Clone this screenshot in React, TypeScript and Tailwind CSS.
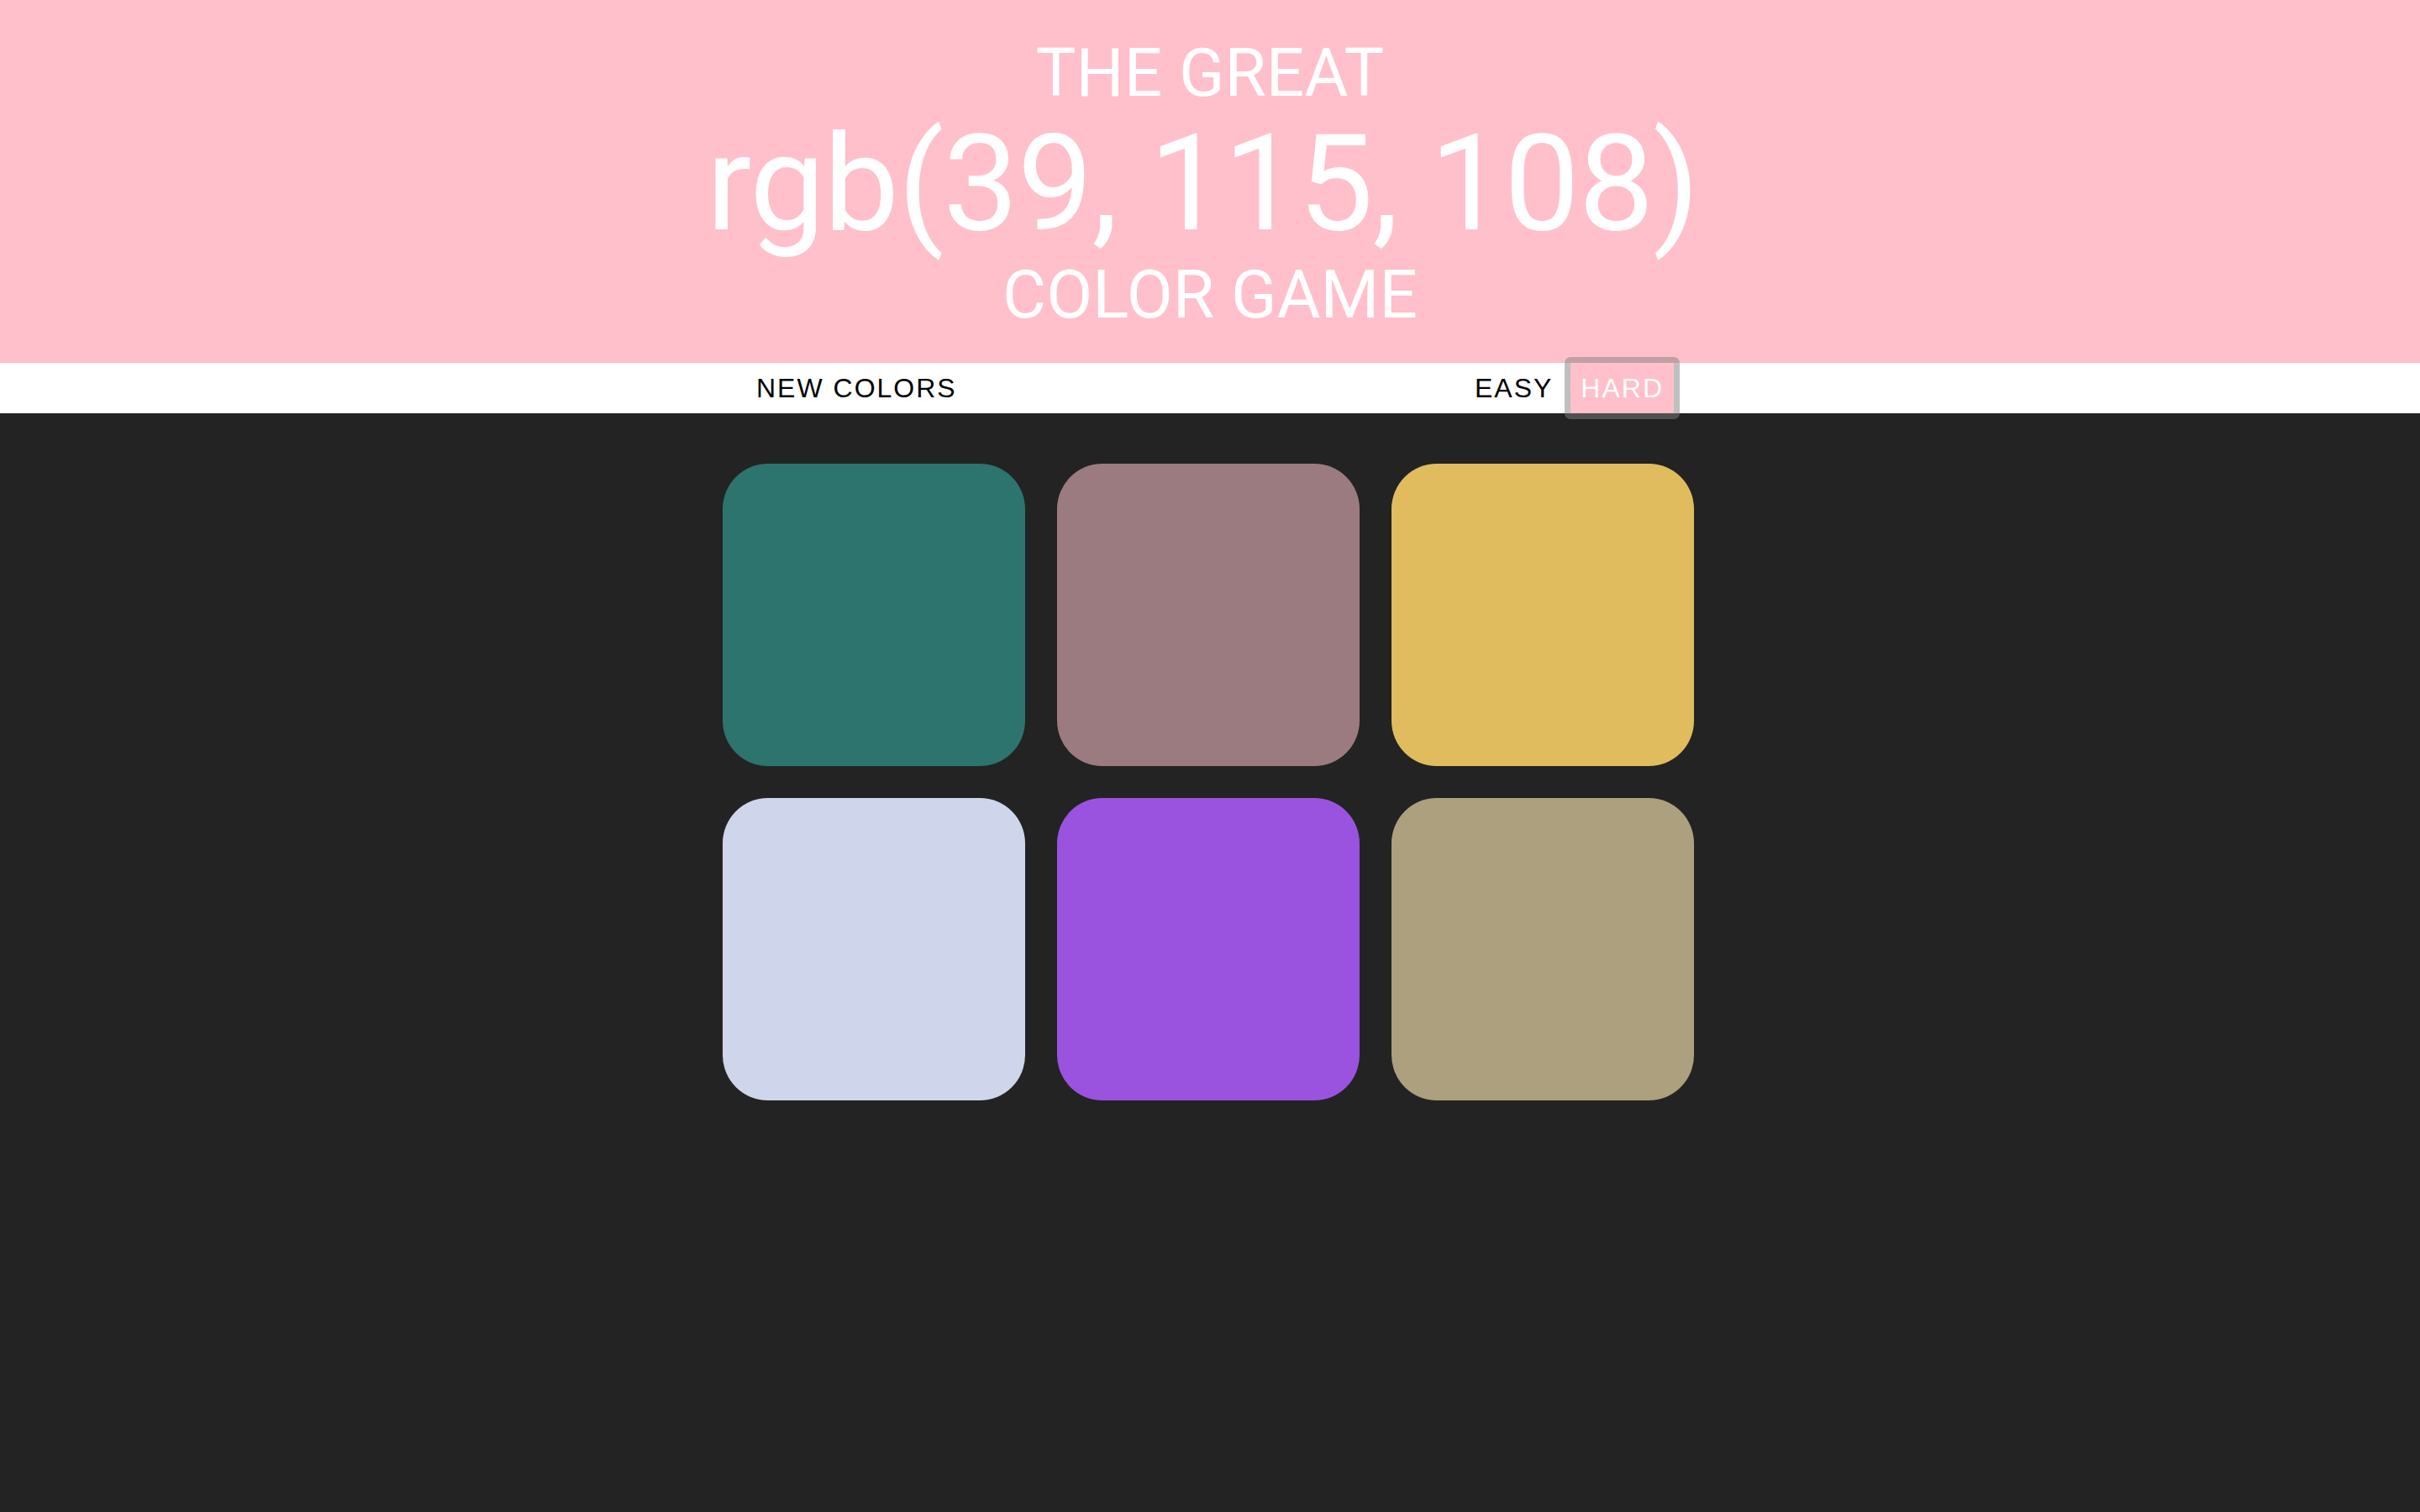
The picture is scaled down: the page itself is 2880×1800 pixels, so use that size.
import React, { useState } from "react";

const squares = [
  "rgb(44, 116, 109)",
  "rgb(156, 123, 128)",
  "rgb(224, 188, 94)",
  "rgb(207, 214, 235)",
  "rgb(154, 83, 222)",
  "rgb(173, 160, 127)",
];

const App = () => {
  const [mode, setMode] = useState("hard");

  return (
    <div className="min-h-screen bg-[#232323] font-['Liberation_Sans',Arial,sans-serif]">
      {/* header */}
      <h1 className="bg-[#ffc0cb] text-white text-center uppercase font-normal leading-[1.1] pt-[43px] pb-[37px] font-['Roboto',sans-serif]">
        <div className="text-[80px]">The Great</div>
        <div className="text-[160px] normal-case tracking-[-1.4px] pr-[18px]">rgb(39, 115, 108)</div>
        <div className="text-[80px]">Color Game</div>
      </h1>

      {/* stripe */}
      <div className="bg-white h-[60px]">
        <div className="w-[1200px] mx-auto h-full px-[48px] flex justify-between items-stretch text-[32px] tracking-[2px] uppercase text-black">
          <button className="px-[12px] uppercase">New Colors</button>
          <div className="flex items-stretch gap-[9px]">
            <button
              onClick={() => setMode("easy")}
              className={mode === "easy" ? "relative px-[12px] bg-[#ffc0cb] text-white uppercase" : "px-[12px] uppercase"}
            >
              Easy
            </button>
            <button
              onClick={() => setMode("hard")}
              className={mode === "hard" ? "relative px-[12px] bg-[#ffc0cb] text-white uppercase" : "px-[12px] uppercase"}
            >
              Hard
              {mode === "hard" && (
                <span className="absolute -inset-[7px] rounded-[7px] border-[7px] border-[#80808080] pointer-events-none" />
              )}
            </button>
          </div>
        </div>
      </div>

      {/* squares */}
      <div className="w-[1200px] mx-auto mt-[40px] flex flex-wrap">
        {squares.map((c, i) => (
          <div
            key={i}
            className="w-[360px] h-[360px] mt-[20px] mb-[18px] ml-[20px] mr-[18px] rounded-[54px]"
            style={{ backgroundColor: c }}
          />
        ))}
      </div>
    </div>
  );
};

export default App;
